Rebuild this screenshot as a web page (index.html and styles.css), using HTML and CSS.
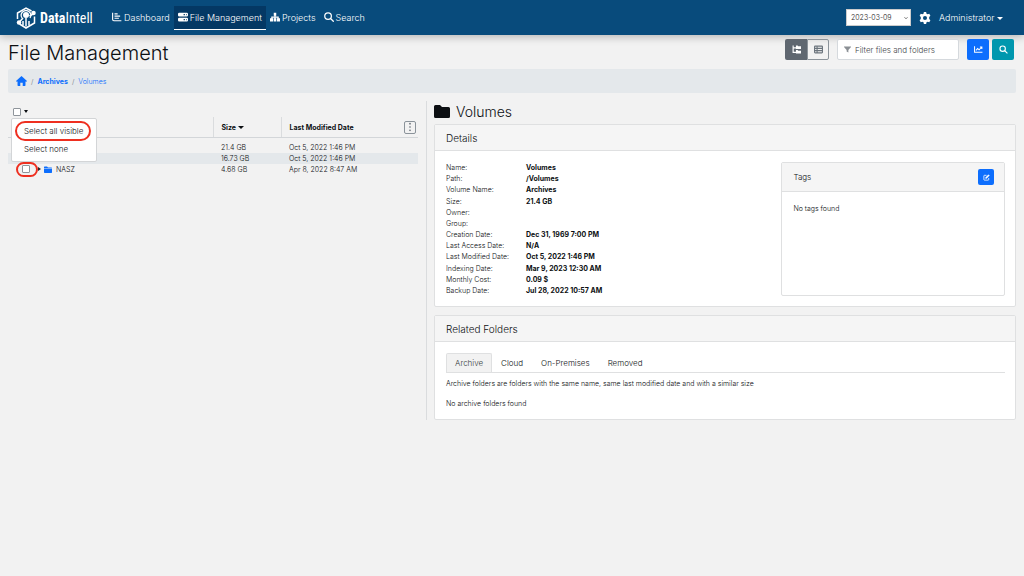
FILE: index.html
```html
<!DOCTYPE html>
<html lang="en">
<head>
  <meta charset="utf-8">
  <meta name="viewport" content="width=device-width, initial-scale=1">
  <title>DataIntell - File Management</title>
  <link rel="stylesheet" href="styles.css">
</head>
<body>
  <header class="navbar">
    <a class="brand" href="#">
      <svg class="brand-logo" viewBox="0 0 40 44" fill="none" stroke="#fff" stroke-width="3">
        <path d="M3 24V12L20 2l11 6M37 19v13L20 42 7 34"/>
        <path d="M14 37V28M20 39V22M26 37V28M7 30l7-8M34 14l-7 4" stroke-width="3"/>
        <circle cx="20" cy="16" r="6" fill="#fff" stroke="none"/>
        <path d="M12 22a9.500 9.500 0 1 1 16 0" stroke-width="2.500"/>
        <circle cx="6" cy="31" r="4.500" fill="#fff" stroke="none"/>
        <circle cx="35" cy="12" r="4.500" fill="#fff" stroke="none"/>
      </svg>
      <span class="brand-name"><b>Data</b>Intell</span>
    </a>
    <nav class="nav">
      <a class="nav-link" href="#">
        <svg class="icon" viewBox="0 0 16 16" fill="none" stroke="currentColor" stroke-width="1.800"><path d="M1 1v11q0 2 2 2h12M4 3h5M4 6.500h9M4 10h7"/></svg>Dashboard
      </a>
      <a class="nav-link active" href="#">
        <svg class="icon" viewBox="0 0 16 16" fill="currentColor"><path fill-rule="evenodd" d="M2 1h12a2 2 0 0 1 2 2v2a2 2 0 0 1-2 2H2a2 2 0 0 1-2-2V3a2 2 0 0 1 2-2zm7 2v2h2V3zm4 0v2h1V3zM2 9h12a2 2 0 0 1 2 2v2a2 2 0 0 1-2 2H2a2 2 0 0 1-2-2v-2a2 2 0 0 1 2-2zm7 2v2h2v-2zm4 0v2h1v-2z"/></svg>File Management
      </a>
      <a class="nav-link" href="#">
        <svg class="icon" viewBox="0 0 16 16" fill="currentColor"><path d="M6 1h4v5H9v1h5v3h2v5h-5v-5h1V9H9v1h1v5H6v-5h1V9H4v1h1v5H0v-5h2V7h5V6H6z"/></svg>Projects
      </a>
      <a class="nav-link" href="#">
        <svg class="icon" viewBox="0 0 16 16" fill="none" stroke="currentColor" stroke-width="2"><circle cx="6.500" cy="6.500" r="5.300"/><path d="M10.500 10.500 15.500 15.500"/></svg>Search
      </a>
    </nav>
    <div class="nav-right">
      <div class="date-picker">
        <select aria-label="Date"><option>2023-03-09</option></select>
        <svg viewBox="0 0 8 8" fill="none" stroke="#333" stroke-width="1.400"><path d="M1 2.500 4 5.500 7 2.500"/></svg>
      </div>
      <a class="settings" href="#" aria-label="Settings">
        <svg viewBox="0 0 16 16" fill="currentColor"><path fill-rule="evenodd" d="M6.500 0h3l.5 2.200 1.500.9 2.200-.8 1.500 2.600L13.600 6.500v2.900l1.600 1.600-1.500 2.600-2.200-.7-1.500.9-.5 2.100h-3L6 13.800l-1.500-.9-2.200.7L.8 11l1.600-1.600V6.500L.8 4.900l1.500-2.600 2.200.8L6 2.200zM8 5.300a2.700 2.700 0 1 0 0 5.400 2.700 2.700 0 0 0 0-5.400z"/></svg>
      </a>
      <a class="user-menu" href="#">Administrator <span class="caret"></span></a>
    </div>
  </header>

  <main class="page">
    <div class="page-head">
      <h1>File Management</h1>
      <div class="toolbar">
        <div class="btn-group">
          <button class="btn btn-dark" type="button" aria-label="Tree view"><svg viewBox="0 0 16 16" fill="currentColor"><path d="M1 1h2v3h4V1h3l1 1h5v5H7V6H3v6h4V9h3l1 1h5v5H7v-1H1z"/></svg></button>
          <button class="btn btn-outline" type="button" aria-label="List view"><svg viewBox="0 0 16 16" fill="none" stroke="currentColor" stroke-width="2"><rect x="1" y="2" width="14" height="12" rx="1"/><path d="M1 6h14M1 10h14M5.500 2v12"/></svg></button>
        </div>
        <label class="filter">
          <svg viewBox="0 0 16 16" fill="currentColor"><path d="M0 1h16v1.500L10 9v6l-4-2.500V9L0 2.500z"/></svg>
          <input type="text" placeholder="Filter files and folders" aria-label="Filter files and folders">
        </label>
        <div class="actions">
          <button class="btn btn-primary" type="button" aria-label="Chart"><svg viewBox="0 0 16 16" fill="none" stroke="currentColor" stroke-width="1.800"><path d="M1 2v11h14M3.500 9.500 6.500 6l2.500 2.500L13.500 4M10.500 3.500h3.500V7"/></svg></button>
          <button class="btn btn-info" type="button" aria-label="Search"><svg viewBox="0 0 16 16" fill="none" stroke="currentColor" stroke-width="2"><circle cx="6.500" cy="6.500" r="4.800"/><path d="M10 10 15 15"/></svg></button>
        </div>
      </div>
    </div>

    <nav class="breadcrumb" aria-label="Breadcrumb">
      <a href="#" aria-label="Home"><svg viewBox="0 0 18 16" fill="currentColor"><path d="M9 0 18 8l-1 1.200-1.500-.2V15q0 1-1 1H11v-5H7v5H3.500q-1 0-1-1V9L1 9.200 0 8z"/></svg></a>
      <span>/</span>
      <a href="#"><b>Archives</b></a>
      <span>/</span>
      <a href="#">Volumes</a>
    </nav>

    <div class="columns">
      <section class="browser">
        <div class="select-menu">
          <input type="checkbox" aria-label="Select"><span class="caret small"></span>
          <div class="dropdown">
            <button class="dropdown-item marked" type="button">Select all visible</button>
            <button class="dropdown-item" type="button">Select none</button>
          </div>
        </div>
        <table class="files">
          <thead>
            <tr>
              <th class="col-name"></th>
              <th class="col-size">Size <span class="caret"></span></th>
              <th class="col-date"><div class="date-head">Last Modified Date <button class="more" type="button" aria-label="Columns"><svg viewBox="0 0 4 12" fill="currentColor"><circle cx="2" cy="2" r="1"/><circle cx="2" cy="6" r="1"/><circle cx="2" cy="10" r="1"/></svg></button></div></th>
            </tr>
          </thead>
          <tbody>
            <tr>
              <td></td>
              <td>21.4 GB</td>
              <td>Oct 5, 2022 1:46 PM</td>
            </tr>
            <tr class="striped">
              <td><div class="file"><span class="check"><input type="checkbox" aria-label="Select folder"></span><span class="arrow"></span><svg class="folder" viewBox="0 0 16 14" fill="currentColor"><path d="M1 1h5l2 2h7l1 1v9l-1 1H1l-1-1V2z"/></svg></div></td>
              <td>16.73 GB</td>
              <td>Oct 5, 2022 1:46 PM</td>
            </tr>
            <tr>
              <td><div class="file"><span class="check marked"><input type="checkbox" aria-label="Select NASZ"></span><span class="arrow"></span><svg class="folder" viewBox="0 0 16 14" fill="currentColor"><path d="M0 4V2l1-1h5l2 2h7l1 1zM0 5h16v8l-1 1H1l-1-1z"/></svg>NASZ</div></td>
              <td>4.68 GB</td>
              <td>Apr 8, 2022 8:47 AM</td>
            </tr>
          </tbody>
        </table>
      </section>

      <section class="info">
        <h2><svg viewBox="0 0 16 13" fill="currentColor"><path d="M1.500 0H6l2 2h6.500Q16 2 16 3.500v8q0 1.500-1.500 1.500h-13Q0 13 0 11.500v-10Q0 0 1.500 0z"/></svg>Volumes</h2>
        <div class="card">
          <h3 class="card-header">Details</h3>
          <div class="card-body details">
            <dl>
              <dt>Name:</dt><dd>Volumes</dd>
              <dt>Path:</dt><dd>/Volumes</dd>
              <dt>Volume Name:</dt><dd>Archives</dd>
              <dt>Size:</dt><dd>21.4 GB</dd>
              <dt>Owner:</dt><dd></dd>
              <dt>Group:</dt><dd></dd>
              <dt>Creation Date:</dt><dd>Dec 31, 1969 7:00 PM</dd>
              <dt>Last Access Date:</dt><dd>N/A</dd>
              <dt>Last Modified Date:</dt><dd>Oct 5, 2022 1:46 PM</dd>
              <dt>Indexing Date:</dt><dd>Mar 9, 2023 12:30 AM</dd>
              <dt>Monthly Cost:</dt><dd>0.09 $</dd>
              <dt>Backup Date:</dt><dd>Jul 28, 2022 10:57 AM</dd>
            </dl>
            <div class="card tags">
              <div class="card-header">
                <h4>Tags</h4>
                <button class="btn btn-primary btn-edit" type="button" aria-label="Edit tags"><svg viewBox="0 0 16 16" fill="none" stroke="currentColor" stroke-width="1.800"><path d="M8 3H3Q2 3 2 4v9q0 1 1 1h9q1 0 1-1V9"/><path d="M6 10V8l6.500-6.500 2 2L8 10z" fill="currentColor" stroke-width="1"/></svg></button>
              </div>
              <p>No tags found</p>
            </div>
          </div>
        </div>

        <div class="card">
          <h3 class="card-header">Related Folders</h3>
          <div class="card-body">
            <div class="tabs" role="tablist">
              <button class="tab active" type="button" role="tab" aria-selected="true">Archive</button>
              <button class="tab" type="button" role="tab">Cloud</button>
              <button class="tab" type="button" role="tab">On-Premises</button>
              <button class="tab" type="button" role="tab">Removed</button>
            </div>
            <p>Archive folders are folders with the same name, same last modified date and with a similar size</p>
            <p>No archive folders found</p>
          </div>
        </div>
      </section>
    </div>
  </main>
</body>
</html>
```
FILE: styles.css
```css
* {
  margin: 0;
  padding: 0;
  box-sizing: border-box;
}

body {
  font-family: Inter, "Liberation Sans", sans-serif;
  font-size: 7px;
  font-weight: 300;
  line-height: 11px;
  color: #0c0f12;
  background: #f2f2f2;
  min-height: 100vh;
}

a {
  color: #0d6efd;
  text-decoration: none;
}

b {
  font-weight: 700;
}

button, input, select {
  font-family: inherit;
  font-weight: inherit;
  color: inherit;
}

svg {
  display: block;
  flex-shrink: 0;
}

.caret {
  display: inline-block;
  border: 3px solid transparent;
  border-top: 3px solid currentColor;
  border-bottom: 0;
  vertical-align: middle;
}

.caret.small {
  border-width: 3px 2px 0;
}

/* Top bar */

.navbar {
  display: flex;
  align-items: center;
  height: 35px;
  padding: 0 21px 0 16px;
  color: #fff;
  background: #084b7c;
  box-shadow: 0 2px 8px rgba(0, 0, 0, 0.25);
}

.navbar a {
  color: #fff;
}

.brand {
  display: flex;
  align-items: center;
  gap: 4px;
  width: 92px;
}

.brand-logo {
  width: 20px;
  height: 22px;
}

.brand-name {
  font-family: "Roboto Condensed", "Liberation Sans Narrow", Roboto, sans-serif;
  font-size: 14px;
  font-weight: 400;
  line-height: 16px;
}

.nav {
  display: flex;
}

.nav-link {
  display: flex;
  align-items: center;
  gap: 2px;
  height: 24px;
  padding: 0 4px;
  font-size: 9px;
  border-bottom: 1px solid transparent;
}

.nav-link.active {
  background: #043864;
  border-color: #fff;
}

.icon {
  width: 10px;
  height: 10px;
}

.nav-right {
  display: flex;
  align-items: center;
  margin-left: auto;
  font-size: 9px;
}

.date-picker {
  display: flex;
  align-items: center;
  width: 65px;
  height: 17px;
  padding: 0 2px 0 4px;
  color: #222;
  background: #fff;
  border: 1px solid #ccc;
}

.date-picker select {
  flex: 1;
  appearance: none;
  font-size: 7px;
  background: none;
  border: 0;
}

.date-picker svg {
  width: 4px;
  height: 4px;
}

.settings {
  margin: 0 8px;
}

.settings svg {
  width: 12px;
  height: 12px;
}

/* Page */

.page {
  padding: 4px 8px;
}

.page-head {
  display: flex;
  justify-content: space-between;
}

h1 {
  font-size: 20px;
  font-weight: 300;
  line-height: 28px;
}

.toolbar {
  display: flex;
  gap: 8px;
  padding-right: 2px;
}

.btn-group {
  display: flex;
}

.btn {
  display: flex;
  align-items: center;
  justify-content: center;
  width: 22px;
  height: 21px;
  border: 1px solid transparent;
  border-radius: 2px;
}

.btn svg {
  width: 9px;
  height: 9px;
}

.btn-dark {
  color: #fff;
  background: #5f6770;
  border-radius: 2px 0 0 2px;
}

.btn-outline {
  color: #6c757d;
  background: transparent;
  border-color: #8b939a;
  border-radius: 0 2px 2px 0;
}

.btn-primary {
  color: #fff;
  background: #0d6efd;
}

.btn-info {
  color: #fff;
  background: #0097ae;
}

.filter {
  display: flex;
  align-items: center;
  gap: 4px;
  width: 122px;
  height: 21px;
  padding: 0 6px;
  color: #8a8f94;
  background: #fff;
  border: 1px solid #d5d9dd;
  border-radius: 2px;
}

.filter svg {
  width: 7px;
  height: 7px;
}

.filter input {
  flex: 1;
  min-width: 0;
  font-size: 8px;
  background: none;
  border: 0;
  outline: none;
}

.filter input::placeholder {
  color: #3c4248;
}

.actions {
  display: flex;
  gap: 3px;
}

.breadcrumb {
  display: flex;
  align-items: center;
  gap: 4px;
  height: 24px;
  margin-top: 2px;
  padding: 0 8px;
  color: #6c757d;
  background: #e4e8eb;
  border-radius: 2px;
}

.breadcrumb svg {
  width: 11px;
  height: 10px;
}

.columns {
  display: grid;
  grid-template-columns: 419fr 589fr;
  margin-top: 8px;
}

/* File list */

.browser {
  padding: 5px 8px 0 0;
  border-right: 1px solid #dadcde;
}

input[type="checkbox"] {
  appearance: none;
  display: block;
  width: 8px;
  height: 8px;
  background: #fff;
  border: 1px solid #8f959b;
  border-radius: 1px;
}

.select-menu {
  position: relative;
  display: flex;
  align-items: center;
  gap: 3px;
  height: 11px;
  padding-left: 5px;
}

.dropdown {
  position: absolute;
  top: 12px;
  left: 3px;
  z-index: 1;
  width: 86px;
  padding: 2px 3px 4px;
  background: #fff;
  border: 1px solid #d3d5d7;
  border-radius: 2px;
}

.dropdown-item {
  display: block;
  height: 16px;
  padding: 0 6px 0 7px;
  font-size: 8px;
  white-space: nowrap;
  background: none;
  border: 2px solid transparent;
}

.marked {
  border: 2px solid #ee2f20;
  border-radius: 10px;
}

.dropdown-item.marked {
  height: 20px;
}

.files {
  width: 100%;
  table-layout: fixed;
  border-collapse: collapse;
}

.files th {
  height: 20px;
  padding: 1px 0 0 8px;
  font-weight: 700;
  text-align: left;
  vertical-align: middle;
  border-bottom: 1px solid #d3d6d9;
}

.files th + th {
  border-left: 1px solid #dadcde;
}

.files td {
  height: 11px;
  padding: 0 0 0 8px;
}

.col-name {
  width: 50%;
}

.col-size {
  width: 68px;
}

.date-head {
  display: flex;
  align-items: center;
  justify-content: space-between;
  padding-right: 2px;
}

.more {
  display: flex;
  align-items: center;
  justify-content: center;
  width: 12px;
  height: 13px;
  color: #5f6770;
  background: none;
  border: 1px solid #8b939a;
  border-radius: 2px;
}

.more svg {
  width: 4px;
  height: 10px;
}

.files tbody::before {
  content: "";
  display: block;
  height: 4px;
}

.striped {
  background: #e4e8eb;
}

.file {
  display: flex;
  align-items: center;
  height: 11px;
}

.check {
  display: flex;
  align-items: center;
  width: 22px;
  height: 15px;
  margin: -2px 0;
  padding-left: 6px;
}

.check.marked {
  padding-left: 4px;
}

.arrow {
  border: 2px solid transparent;
  border-left: 3px solid #212529;
  border-right: 0;
}

.folder {
  width: 8px;
  height: 7px;
  margin: 0 4px 0 3px;
  color: #0d6efd;
}

/* Folder information */

.info {
  padding-left: 7px;
}

h2 {
  display: flex;
  align-items: center;
  gap: 6px;
  height: 20px;
  margin-bottom: 3px;
  font-size: 14px;
  font-weight: 300;
}

h2 svg {
  width: 16px;
  height: 13px;
}

.card {
  background: #fff;
  border: 1px solid #dfe0e1;
  border-radius: 2px;
}

.card + .card {
  margin-top: 8px;
}

.card-header {
  height: 26px;
  padding: 0 11px;
  font-size: 10px;
  font-weight: 300;
  line-height: 26px;
  background: #f5f5f5;
  border-bottom: 1px solid #dfe0e1;
}

.card-body {
  padding: 11px 10px 10px 11px;
}

.details {
  display: grid;
  grid-template-columns: 3fr 2fr;
}

dl {
  display: grid;
  grid-template-columns: 80px 1fr;
  grid-auto-rows: 1fr;
}

dd {
  font-weight: 700;
}

.tags {
  height: 134px;
}

.tags .card-header {
  display: flex;
  align-items: center;
  justify-content: space-between;
  height: 29px;
  padding-right: 10px;
}

.tags p {
  padding: 11px;
}

h4 {
  font-size: 8px;
  font-weight: 300;
}

.btn-edit {
  width: 16px;
  height: 16px;
}

.btn-edit svg {
  width: 7px;
  height: 7px;
}

.tabs {
  display: flex;
  margin-bottom: 5px;
  border-bottom: 1px solid #dfe0e1;
}

.tab {
  height: 19px;
  padding: 0 8px;
  font-size: 8px;
  background: none;
  border: 1px solid transparent;
  border-bottom: 0;
}

.tab.active {
  color: #343a40;
  background: #f2f2f2;
  border-color: #dfe0e1;
  border-radius: 2px 2px 0 0;
}

.tabs ~ p + p {
  margin-top: 9px;
}
```
